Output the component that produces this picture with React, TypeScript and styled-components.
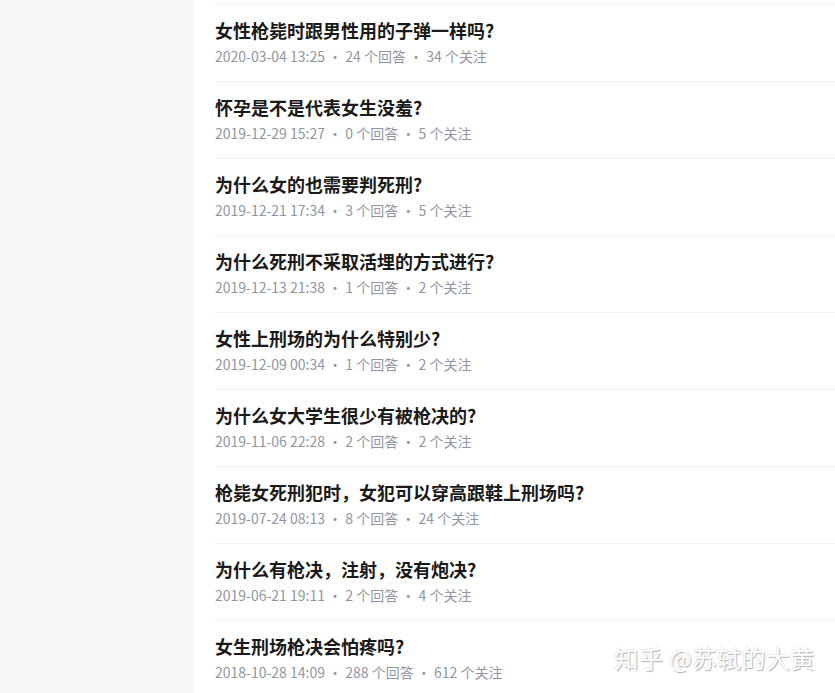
import React from "react";
import styled, { createGlobalStyle } from "styled-components";

type Question = {
    title: string;
    time: string;
    answers: number;
    follows: number;
};

const questions: Question[] = [
    { title: "女性枪毙时跟男性用的子弹一样吗?", time: "2020-03-04 13:25", answers: 24, follows: 34 },
    { title: "怀孕是不是代表女生没羞?", time: "2019-12-29 15:27", answers: 0, follows: 5 },
    { title: "为什么女的也需要判死刑?", time: "2019-12-21 17:34", answers: 3, follows: 5 },
    { title: "为什么死刑不采取活埋的方式进行?", time: "2019-12-13 21:38", answers: 1, follows: 2 },
    { title: "女性上刑场的为什么特别少?", time: "2019-12-09 00:34", answers: 1, follows: 2 },
    { title: "为什么女大学生很少有被枪决的?", time: "2019-11-06 22:28", answers: 2, follows: 2 },
    { title: "枪毙女死刑犯时，女犯可以穿高跟鞋上刑场吗?", time: "2019-07-24 08:13", answers: 8, follows: 24 },
    { title: "为什么有枪决，注射，没有炮决?", time: "2019-06-21 19:11", answers: 2, follows: 4 },
    { title: "女生刑场枪决会怕疼吗?", time: "2018-10-28 14:09", answers: 288, follows: 612 },
];

const GlobalStyle = createGlobalStyle`
    html, body {
        margin: 0;
        padding: 0;
        background: #f6f6f6;
        overflow: hidden;
    }
    body {
        font-family: "Noto Sans CJK SC", sans-serif;
    }
`;

const Page = styled.div`
    position: relative;
    display: flex;
    width: 835px;
    height: 693px;
    overflow: hidden;
`;

const Sidebar = styled.div`
    flex: 0 0 194px;
    background: #f6f6f6;
`;

const Panel = styled.main`
    flex: 1;
    background: #fff;
    padding: 4px 0 0 21px;
`;

const Item = styled.div`
    border-top: 1px solid #f0f2f7;
    padding: 12px 0 14px;
`;

const Title = styled.h2`
    margin: 0;
    font-size: 18px;
    line-height: 26px;
    font-weight: 700;
    color: #1a1a1a;
`;

const Meta = styled.div`
    margin-top: 2px;
    font-size: 14px;
    line-height: 22px;
    color: #8f96a3;
`;

const Watermark = styled.div`
    position: absolute;
    right: 20px;
    bottom: 20px;
    font-size: 24px;
    line-height: 30px;
    letter-spacing: 0.5px;
    white-space: nowrap;
    color: #fff;
    text-shadow: 1px 1px 1px #b0b0b0, -1px -1px 0 #ececec;
`;

const App = () => {
    return (
        <>
            <GlobalStyle />
            <Page>
                <Sidebar />
                <Panel>
                    {questions.map((q) => (
                        <Item key={q.title}>
                            <Title>{q.title}</Title>
                            <Meta>
                                {q.time} · {q.answers} 个回答 · {q.follows} 个关注
                            </Meta>
                        </Item>
                    ))}
                </Panel>
                <Watermark>知乎 @苏轼的大黄</Watermark>
            </Page>
        </>
    );
};

export default App;
